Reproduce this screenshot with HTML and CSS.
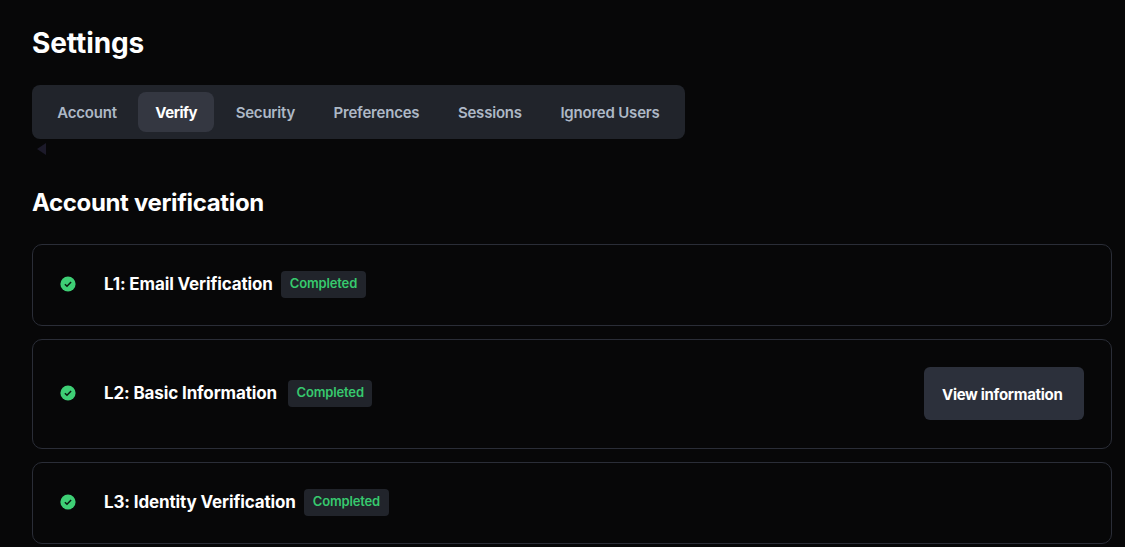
FILE: index.html
```html
<!DOCTYPE html>
<html lang="en">
<head>
<meta charset="utf-8">
<title>Settings</title>
<link rel="stylesheet" href="styles.css">
</head>
<body>
<main class="page">
  <h1 class="title">Settings</h1>
  <nav class="tabs">
    <a class="tab">Account</a>
    <a class="tab active">Verify</a>
    <a class="tab">Security</a>
    <a class="tab">Preferences</a>
    <a class="tab">Sessions</a>
    <a class="tab">Ignored Users</a>
  </nav>
  <div class="scroll-arrow"></div>
  <h2 class="section">Account verification</h2>
  <section class="cards">
    <article class="card">
      <svg class="check" viewBox="0 0 16 16"><circle cx="8" cy="8" r="7.6" fill="#3ecf75"/><path d="M4.9 8.2l2.1 2.1 4.1-4.3" fill="none" stroke="#0a1a10" stroke-width="1.5"/></svg>
      <span class="name">L1: Email Verification</span>
      <span class="badge">Completed</span>
    </article>
    <article class="card tall">
      <svg class="check" viewBox="0 0 16 16"><circle cx="8" cy="8" r="7.6" fill="#3ecf75"/><path d="M4.9 8.2l2.1 2.1 4.1-4.3" fill="none" stroke="#0a1a10" stroke-width="1.5"/></svg>
      <span class="name">L2: Basic Information</span>
      <span class="badge">Completed</span>
      <button class="btn">View information</button>
    </article>
    <article class="card">
      <svg class="check" viewBox="0 0 16 16"><circle cx="8" cy="8" r="7.6" fill="#3ecf75"/><path d="M4.9 8.2l2.1 2.1 4.1-4.3" fill="none" stroke="#0a1a10" stroke-width="1.5"/></svg>
      <span class="name">L3: Identity Verification</span>
      <span class="badge">Completed</span>
    </article>
  </section>
</main>
</body>
</html>
```
FILE: styles.css
```css
* { box-sizing: border-box; }
html, body { margin: 0; height: 100%; overflow: hidden; background: #070708; }
body { font-family: Inter, "Liberation Sans", sans-serif; color: #fff; }
.page { padding: 26px 13px 0 32px; }
.title { margin: 0; font-size: 28px; line-height: 34px; font-weight: 700; letter-spacing: -0.1px; }
.tabs { display: flex; width: 653px; height: 54px; margin-top: 25px; padding: 7px 8px; gap: 4px; background: #21242b; border-radius: 8px; }
.tab { display: flex; align-items: center; padding: 0 17.25px; border-radius: 8px; font-size: 15px; font-weight: 600; color: #adb8c6; letter-spacing: -0.2px; white-space: nowrap; }
.tab.active { background: #343741; color: #fff; font-weight: 700; letter-spacing: -0.45px; }
.scroll-arrow { width: 0; height: 0; margin: 4px 0 0 5px; border-style: solid; border-width: 6px 9px 6px 0; border-color: transparent #1c1a2a transparent transparent; }
.section { margin: 33px 0 0; font-size: 24px; line-height: 30px; font-weight: 700; letter-spacing: -0.35px; }
.cards { display: flex; flex-direction: column; gap: 13px; margin-top: 26px; }
.card { display: flex; align-items: center; height: 82px; padding: 0 27px; border: 1px solid #2a2d37; border-radius: 10px; }
.card.tall { height: 109.5px; }
.check { width: 16px; height: 16px; margin-right: 28px; flex: none; position: relative; top: -1px; }
.name { font-size: 17px; font-weight: 700; letter-spacing: -0.13px; position: relative; top: -1px; }
.badge { margin-left: 8px; padding: 0 8.5px 0 9px; height: 27px; line-height: 25px; background: #21242b; border-radius: 4px; color: #37c96e; font-size: 13px; font-weight: 600; letter-spacing: -0.15px; position: relative; top: -0.5px; }
.tall .badge { margin-left: 10.5px; }
.btn { margin-left: auto; width: 160px; height: 53px; padding: 1px 0 0 18px; text-align: left; background: #2c303b; border: 0; border-radius: 6px; color: #fff; font: 700 15px Inter, "Liberation Sans", sans-serif; letter-spacing: -0.3px; }
```
